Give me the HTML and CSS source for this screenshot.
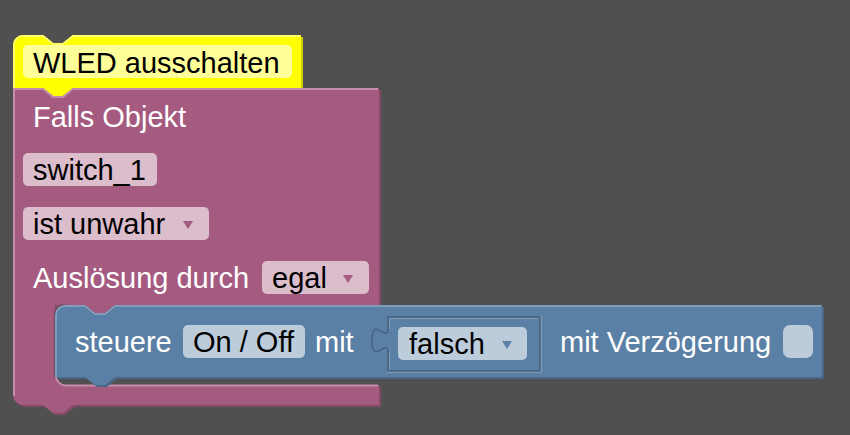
FILE: index.html
```html
<!DOCTYPE html>
<html lang="de">
<head>
<meta charset="utf-8">
<title>Blockly – WLED ausschalten</title>
<link rel="stylesheet" href="styles.css">
</head>
<body>
<div class="workspace">
  <svg class="canvas" width="850" height="435" viewBox="0 0 850 435" xmlns="http://www.w3.org/2000/svg">
    <!-- Kommentar-Block (gelb) -->
    <g class="block block-yellow">
      <path class="shade" transform="translate(2,2)" d="M 13,45 a 10,10 0 0 1 10,-10 H 43 l 10,8 h 10 l 10,-8 H 301 V 88 H 73 l -10,8 h -10 l -10,-8 H 13 Z"/>
      <path class="body" d="M 13,45 a 10,10 0 0 1 10,-10 H 43 l 10,8 h 10 l 10,-8 H 301 V 88 H 73 l -10,8 h -10 l -10,-8 H 13 Z"/>
      <path class="light" d="M 14,88 V 45 a 9,9 0 0 1 9,-9 H 43 l 10,8 h 10 l 10,-8 H 300"/>
      <rect class="field" x="23" y="45" width="269" height="33" rx="5"/>
      <text class="label dark" x="33" y="73">WLED ausschalten</text>
    </g>

    <!-- Trigger-Block (rosa) -->
    <g class="block block-pink">
      <path class="shade" transform="translate(2,2)" d="M 13,88 H 43 l 10,8 h 10 l 10,-8 H 379 V 305 H 115 l -10,8 h -10 l -10,-8 H 55 V 375 a 10,10 0 0 0 10,10 H 379 V 405 H 73 l -10,8 h -10 l -10,-8 H 23 a 10,10 0 0 1 -10,-10 Z"/>
      <path class="body" d="M 13,88 H 43 l 10,8 h 10 l 10,-8 H 379 V 305 H 115 l -10,8 h -10 l -10,-8 H 55 V 375 a 10,10 0 0 0 10,10 H 379 V 405 H 73 l -10,8 h -10 l -10,-8 H 23 a 10,10 0 0 1 -10,-10 Z"/>
      <path class="light" d="M 14,396 V 89 H 43 l 10,8 h 10 l 10,-8 H 378"/>
      <path class="light" d="M 56,375 a 10,10 0 0 0 10,10.5 H 378"/>
      <text class="label white" x="33" y="127">Falls Objekt</text>
      <rect class="field" x="23" y="153" width="134" height="33" rx="5"/>
      <text class="label dark" x="33" y="180">switch_1</text>
      <rect class="field" x="23" y="207" width="186" height="33" rx="5"/>
      <text class="label dark" x="33" y="234">ist unwahr</text>
      <polygon class="arrow" points="183,221 193,221 188,229"/>
      <text class="label white" x="33" y="288">Auslösung durch</text>
      <rect class="field" x="262" y="261" width="107" height="33" rx="5"/>
      <text class="label dark" x="272" y="288">egal</text>
      <polygon class="arrow" points="343,275 353,275 348,283"/>
    </g>

    <!-- Steuer-Block (blau) -->
    <g class="block block-blue">
      <path class="edge" d="M 54.5,377 V 315 a 10.5,10.5 0 0 1 10.5,-10.5"/>
      <path class="shade" transform="translate(2,2)" d="M 55,315 a 10,10 0 0 1 10,-10 H 85 l 10,8 h 10 l 10,-8 H 822 V 377 H 115 l -10,8 h -10 l -10,-8 H 55 Z"/>
      <path class="body" d="M 55,315 a 10,10 0 0 1 10,-10 H 85 l 10,8 h 10 l 10,-8 H 822 V 377 H 115 l -10,8 h -10 l -10,-8 H 55 Z"/>
      <path class="light" d="M 56,377 V 315 a 9,9 0 0 1 9,-9 H 85 l 10,8 h 10 l 10,-8 H 821"/>
      <text class="label white" x="75" y="352">steuere</text>
      <rect class="field" x="183" y="325" width="122" height="33" rx="5"/>
      <text class="label dark" x="193" y="352">On / Off</text>
      <text class="label white" x="315" y="352">mit</text>

      <!-- eingesteckter Wert-Block -->
      <path class="socket-light" d="M 387,372 H 541 V 316"/>
      <path class="child" d="M 388,317 V 328 c 0,17 -16,-14 -16,12.5 s 16,-4 16,12.5 V 371 H 540 V 317 Z"/>
      <path class="child-light" d="M 389.5,352 V 370 M 389.5,329 V 318.5 H 538.5"/>
      <rect class="field" x="398" y="327" width="129" height="33" rx="5"/>
      <text class="label dark" x="409" y="354">falsch</text>
      <polygon class="arrow" points="502,341 512,341 507,349"/>

      <text class="label white" x="560" y="352">mit Verzögerung</text>
      <rect class="field" x="783" y="325" width="30" height="33" rx="7"/>
    </g>
  </svg>
</div>
</body>
</html>
```
FILE: styles.css
```css
html, body {
  margin: 0;
  padding: 0;
  background: #505050;
}

.workspace {
  width: 850px;
  height: 435px;
  overflow: hidden;
  background: #505050;
}

.canvas {
  display: block;
}

.label {
  font-family: "Liberation Sans", Arial, sans-serif;
  font-size: 29px;
}

.label.white { fill: #ffffff; }
.label.dark { fill: #000000; }

.light {
  fill: none;
  stroke-width: 2;
}

/* yellow comment block */
.block-yellow .body { fill: #ffff00; }
.block-yellow .shade { fill: #cccc00; }
.block-yellow .light { stroke: #ffff66; }
.block-yellow .field { fill: #ffff99; }

/* pink trigger block */
.block-pink .body { fill: #a55b80; }
.block-pink .shade { fill: #844966; }
.block-pink .light { stroke: #c48daa; }
.block-pink .field { fill: #dbbdcc; }
.block-pink .arrow { fill: #a55b80; }

/* blue control block */
.block-blue .edge {
  fill: none;
  stroke: #7a4c63;
  stroke-width: 1.5;
}
.block-blue .body { fill: #5b80a5; }
.block-blue .shade { fill: #496684; }
.block-blue .light { stroke: #8aa6c2; stroke-width: 1.5; }
.block-blue .field { fill: #bdccdb; }
.block-blue .arrow { fill: #5b80a5; }

.block-blue .child {
  fill: #5b80a5;
  stroke: #46627f;
  stroke-width: 1.5;
}

.block-blue .child-light {
  fill: none;
  stroke: #7f9cb9;
  stroke-width: 1;
}

.block-blue .socket-light {
  fill: none;
  stroke: #8aa4be;
  stroke-width: 1.5;
}
```
